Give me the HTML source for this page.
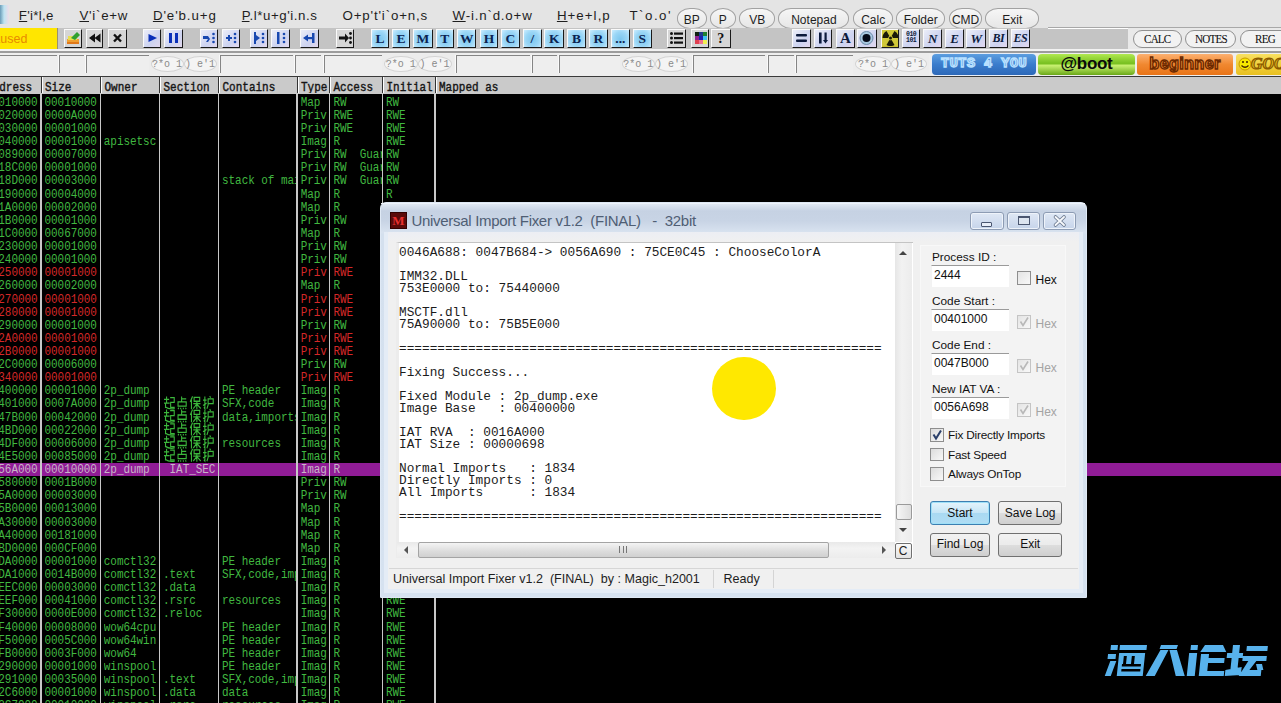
<!DOCTYPE html><html><head><meta charset="utf-8"><style>
*{margin:0;padding:0;box-sizing:border-box}
html,body{width:1281px;height:703px;overflow:hidden;background:#000}
body{position:relative;font-family:"Liberation Sans",sans-serif}
.ab{position:absolute}
.mono{font-family:"Liberation Mono",monospace}
.menu{position:absolute;top:0;left:0;width:1281px;height:28px;background:#e4e4e4}
.mi{position:absolute;top:9.2px;font-size:13.3px;letter-spacing:0.3px;color:#1e1e1e;white-space:pre;line-height:14px}
.rb{position:absolute;top:8px;height:20.5px;border:1.6px solid #a2a2a2;border-radius:13px/10px;background:linear-gradient(#f6f6f6,#e6e6e6);font-size:12px;color:#1e1e1e;text-align:center;line-height:22px}
.tb{position:absolute;top:28px;left:0;width:1281px;height:22px;background:#c4c4c4}
.btn{position:absolute;top:29px;width:19px;height:19px;border:1px solid #2a2a2a;border-top-color:#f0f0f0;border-left-color:#f0f0f0;background:#d8d8d8}
.lb{position:absolute;top:29px;width:19.5px;height:19.5px;border:1px solid #333;border-top-color:#e8f4ff;border-left-color:#e8f4ff;background:linear-gradient(#c9e9ff,#8ccaf2);font-family:"Liberation Serif",serif;font-weight:bold;font-size:14px;color:#0d2a55;text-align:center;line-height:18px}
.ib{position:absolute;top:29px;width:19.5px;height:19.5px;border:1px solid #333;border-top-color:#fff;border-left-color:#fff;background:linear-gradient(#e2ebfa,#bccbea);font-family:"Liberation Serif",serif;font-weight:bold;font-style:italic;font-size:14px;color:#152a4a;text-align:center;line-height:18px}
.r3{position:absolute;top:50px;left:0;width:1281px;height:26.5px;background:#eeeeee}
.hdr{position:absolute;top:76px;left:0;width:1281px;height:17.5px;background:#cacaca;border-top:1.2px solid #3a3a3a}
.hc{position:absolute;top:0;height:16.3px;border-left:1px solid #fff;box-shadow:-1px 0 0 #333;font-family:"Liberation Mono",monospace;font-weight:normal;-webkit-text-stroke:0.35px #151515;font-size:11px;color:#151515;line-height:16px;padding-left:2.5px;white-space:pre;overflow:hidden}
.hc span{display:inline-block;transform:translateY(2.7px) scaleY(1.2);transform-origin:50% 70%}
.vs{position:absolute;top:93.5px;width:1.6px;height:610px;background:#c8c8c8}
.row{position:absolute;left:0;width:1281px;height:13.12px}
.c{position:absolute;top:1.5px;font-family:"Liberation Mono",monospace;font-size:11px;letter-spacing:-0.05px;line-height:13px;white-space:pre;color:#40b840;overflow:hidden}
.c span{display:inline-block;transform:scaleY(1.15)}
.red{color:#d42828}
.sel{color:#c8b4c8}
</style></head><body>
<div class="menu"></div>
<div class="ab" style="left:0;top:5px;width:9px;height:19px;background:linear-gradient(90deg,#6a9cb8,#bfe4f2 45%,#ecdde8)"></div>
<div class="mi" style="left:18.8px;letter-spacing:0.28px"><u>F</u>'i*l,e</div>
<div class="mi" style="left:79.4px;letter-spacing:0.74px"><u>V</u>'i`e+w</div>
<div class="mi" style="left:152.9px;letter-spacing:0.9px"><u>D</u>'e'b.u+g</div>
<div class="mi" style="left:241.8px;letter-spacing:0.56px"><u>P</u>.l*u+g'i.n.s</div>
<div class="mi" style="left:342.5px;letter-spacing:0.85px">O+p't'i`o+n,s</div>
<div class="mi" style="left:452.5px;letter-spacing:0.82px"><u>W</u>-i.n`d.o+w</div>
<div class="mi" style="left:556.9px;letter-spacing:1.05px"><u>H</u>+e+l,p</div>
<div class="mi" style="left:629.5px;letter-spacing:1.48px">T`o.o'</div>
<div class="rb" style="left:676.5px;width:30.5px">BP</div>
<div class="rb" style="left:709.5px;width:26.5px">P</div>
<div class="rb" style="left:739px;width:36.299999999999955px">VB</div>
<div class="rb" style="left:778.3px;width:71.20000000000005px">Notepad</div>
<div class="rb" style="left:853.3px;width:39.700000000000045px">Calc</div>
<div class="rb" style="left:896px;width:49.299999999999955px">Folder</div>
<div class="rb" style="left:948.8px;width:33.60000000000002px">CMD</div>
<div class="rb" style="left:985.3px;width:54.0px">Exit</div>
<div class="tb"></div>
<div class="ab" style="left:1048px;top:27px;width:233px;height:1.5px;background:#fff"></div>
<div class="ab" style="left:0;top:27.6px;width:57.5px;height:22px;background:#ffe600;border-right:1.2px solid #9a9070;border-bottom:1.2px solid #9a9070;overflow:hidden"><div class="ab" style="left:-15px;top:4px;font-size:12.5px;line-height:14px;color:#e88a00;white-space:pre">Paused</div></div>
<div class="ab" style="left:64px;top:28.6px;width:18px;height:19.6px;background:#d6d6d6;border-top:1.5px solid #fafafa;border-left:1.5px solid #fafafa;border-right:1.8px solid #1a1a1a;border-bottom:1.8px solid #1a1a1a;overflow:hidden"><svg class="ab" style="left:0;top:0" width="16" height="16" viewBox="0 0 16 16"><rect x="2" y="9" width="12" height="5" fill="#f0a030"/><rect x="3" y="6" width="9" height="4" fill="#e8e050"/><path d="M6 8 L12 2 L15 5 L10 10Z" fill="#30a030"/><rect x="2" y="12" width="12" height="2" fill="#e07818"/></svg></div>
<div class="ab" style="left:85.7px;top:28.6px;width:17.700000000000003px;height:19.6px;background:#d6d6d6;border-top:1.5px solid #fafafa;border-left:1.5px solid #fafafa;border-right:1.8px solid #1a1a1a;border-bottom:1.8px solid #1a1a1a;overflow:hidden"><svg class="ab" style="left:0;top:0" width="16" height="16" viewBox="0 0 16 16"><path d="M2 8 L8 3.5 V12.5Z M7.5 8 L13.5 3.5 V12.5Z" fill="#111"/></svg></div>
<div class="ab" style="left:108px;top:28.6px;width:18.5px;height:19.6px;background:#d6d6d6;border-top:1.5px solid #fafafa;border-left:1.5px solid #fafafa;border-right:1.8px solid #1a1a1a;border-bottom:1.8px solid #1a1a1a;overflow:hidden"><svg class="ab" style="left:0;top:0" width="17" height="16" viewBox="0 0 17 16"><path d="M5 4.5 L12 11.5 M12 4.5 L5 11.5" stroke="#111" stroke-width="2.4"/></svg></div>
<div class="ab" style="left:142.8px;top:28.6px;width:18.0px;height:19.6px;background:linear-gradient(135deg,#eceef8,#cdd3f0 60%,#e2d8ee);border-top:1.5px solid #fafafa;border-left:1.5px solid #fafafa;border-right:1.8px solid #1a1a1a;border-bottom:1.8px solid #1a1a1a;overflow:hidden"><svg class="ab" style="left:0;top:0" width="16" height="16" viewBox="0 0 16 16"><path d="M4.5 4 L13 8 L4.5 12Z" fill="#0a2fb8"/></svg></div>
<div class="ab" style="left:164.4px;top:28.6px;width:18.299999999999983px;height:19.6px;background:linear-gradient(135deg,#eceef8,#cdd3f0 60%,#e2d8ee);border-top:1.5px solid #fafafa;border-left:1.5px solid #fafafa;border-right:1.8px solid #1a1a1a;border-bottom:1.8px solid #1a1a1a;overflow:hidden"><svg class="ab" style="left:0;top:0" width="16" height="16" viewBox="0 0 16 16"><rect x="4" y="3" width="3" height="10" fill="#0a2fb8"/><rect x="10" y="3" width="3" height="10" fill="#0a2fb8"/></svg></div>
<div class="ab" style="left:199.6px;top:28.6px;width:18.200000000000017px;height:19.6px;background:linear-gradient(135deg,#eceef8,#cdd3f0 60%,#e2d8ee);border-top:1.5px solid #fafafa;border-left:1.5px solid #fafafa;border-right:1.8px solid #1a1a1a;border-bottom:1.8px solid #1a1a1a;overflow:hidden"><svg class="ab" style="left:0;top:0" width="16" height="16" viewBox="0 0 16 16"><path d="M2 6 h5 l2 3 l-2 3 h-2 l2-3 h-5z" fill="#1848b0"/><circle cx="12.5" cy="4" r="1.3" fill="#1848b0"/><circle cx="12.5" cy="8" r="1.3" fill="#1848b0"/><circle cx="12.5" cy="12" r="1.3" fill="#1848b0"/></svg></div>
<div class="ab" style="left:221.5px;top:28.6px;width:18.0px;height:19.6px;background:linear-gradient(135deg,#eceef8,#cdd3f0 60%,#e2d8ee);border-top:1.5px solid #fafafa;border-left:1.5px solid #fafafa;border-right:1.8px solid #1a1a1a;border-bottom:1.8px solid #1a1a1a;overflow:hidden"><svg class="ab" style="left:0;top:0" width="16" height="16" viewBox="0 0 16 16"><path d="M3 7 h6 v2 h-6z M5 5 h2 v6 h-2z" fill="#1848b0"/><circle cx="12" cy="4" r="1.3" fill="#1848b0"/><circle cx="12" cy="8" r="1.3" fill="#1848b0"/><circle cx="12" cy="12" r="1.3" fill="#1848b0"/></svg></div>
<div class="ab" style="left:250px;top:28.6px;width:17.600000000000023px;height:19.6px;background:linear-gradient(135deg,#eceef8,#cdd3f0 60%,#e2d8ee);border-top:1.5px solid #fafafa;border-left:1.5px solid #fafafa;border-right:1.8px solid #1a1a1a;border-bottom:1.8px solid #1a1a1a;overflow:hidden"><svg class="ab" style="left:0;top:0" width="16" height="16" viewBox="0 0 16 16"><rect x="3" y="2" width="2" height="12" fill="#1848b0"/><path d="M5 5 L9 8 L5 11Z" fill="#1848b0"/><circle cx="12" cy="4" r="1.3" fill="#1848b0"/><circle cx="12" cy="8" r="1.3" fill="#1848b0"/><circle cx="12" cy="12" r="1.3" fill="#1848b0"/></svg></div>
<div class="ab" style="left:271px;top:28.6px;width:18.5px;height:19.6px;background:linear-gradient(135deg,#eceef8,#cdd3f0 60%,#e2d8ee);border-top:1.5px solid #fafafa;border-left:1.5px solid #fafafa;border-right:1.8px solid #1a1a1a;border-bottom:1.8px solid #1a1a1a;overflow:hidden"><svg class="ab" style="left:0;top:0" width="16" height="16" viewBox="0 0 16 16"><rect x="5" y="2" width="2.5" height="12" fill="#1848b0"/><circle cx="12" cy="4" r="1.3" fill="#1848b0"/><circle cx="12" cy="8" r="1.3" fill="#1848b0"/><circle cx="12" cy="12" r="1.3" fill="#1848b0"/></svg></div>
<div class="ab" style="left:300px;top:28.6px;width:19px;height:19.6px;background:linear-gradient(135deg,#eceef8,#cdd3f0 60%,#e2d8ee);border-top:1.5px solid #fafafa;border-left:1.5px solid #fafafa;border-right:1.8px solid #1a1a1a;border-bottom:1.8px solid #1a1a1a;overflow:hidden"><svg class="ab" style="left:0;top:0" width="16" height="16" viewBox="0 0 16 16"><path d="M2 8 L7 4.5 V11.5Z" fill="#1848b0"/><rect x="6" y="7" width="5" height="2.2" fill="#1848b0"/><rect x="11" y="3" width="2.5" height="10" fill="#1848b0"/></svg></div>
<div class="ab" style="left:335.9px;top:28.6px;width:17.700000000000045px;height:19.6px;background:#d6d6d6;border-top:1.5px solid #fafafa;border-left:1.5px solid #fafafa;border-right:1.8px solid #1a1a1a;border-bottom:1.8px solid #1a1a1a;overflow:hidden"><svg class="ab" style="left:0;top:0" width="16" height="16" viewBox="0 0 16 16"><path d="M2 6.5 h6 v-3 l4 4.5 l-4 4.5 v-3 h-6z" fill="#111"/><circle cx="13.5" cy="3.5" r="1.4" fill="#111"/><circle cx="13.5" cy="8" r="1.4" fill="#111"/><circle cx="13.5" cy="12.5" r="1.4" fill="#111"/></svg></div>
<div class="ab" style="left:371.2px;top:28.6px;width:17.80000000000001px;height:19.6px;background:radial-gradient(ellipse at 50% 55%,#7cc6ee 0%,#9ad6f6 55%,#cdeeff 100%);border-top:1.5px solid #fafafa;border-left:1.5px solid #fafafa;border-right:1.8px solid #1a1a1a;border-bottom:1.8px solid #1a1a1a;overflow:hidden"><div class="ab" style="left:0;top:0;width:100%;text-align:center;font-family:'Liberation Serif',serif;font-weight:bold;font-size:13.5px;line-height:17px;color:#0a2250">L</div></div>
<div class="ab" style="left:392px;top:28.6px;width:18px;height:19.6px;background:radial-gradient(ellipse at 50% 55%,#7cc6ee 0%,#9ad6f6 55%,#cdeeff 100%);border-top:1.5px solid #fafafa;border-left:1.5px solid #fafafa;border-right:1.8px solid #1a1a1a;border-bottom:1.8px solid #1a1a1a;overflow:hidden"><div class="ab" style="left:0;top:0;width:100%;text-align:center;font-family:'Liberation Serif',serif;font-weight:bold;font-size:13.5px;line-height:17px;color:#0a2250">E</div></div>
<div class="ab" style="left:413px;top:28.6px;width:19.80000000000001px;height:19.6px;background:radial-gradient(ellipse at 50% 55%,#7cc6ee 0%,#9ad6f6 55%,#cdeeff 100%);border-top:1.5px solid #fafafa;border-left:1.5px solid #fafafa;border-right:1.8px solid #1a1a1a;border-bottom:1.8px solid #1a1a1a;overflow:hidden"><div class="ab" style="left:0;top:0;width:100%;text-align:center;font-family:'Liberation Serif',serif;font-weight:bold;font-size:13.5px;line-height:17px;color:#0a2250">M</div></div>
<div class="ab" style="left:436px;top:28.6px;width:17.69999999999999px;height:19.6px;background:radial-gradient(ellipse at 50% 55%,#7cc6ee 0%,#9ad6f6 55%,#cdeeff 100%);border-top:1.5px solid #fafafa;border-left:1.5px solid #fafafa;border-right:1.8px solid #1a1a1a;border-bottom:1.8px solid #1a1a1a;overflow:hidden"><div class="ab" style="left:0;top:0;width:100%;text-align:center;font-family:'Liberation Serif',serif;font-weight:bold;font-size:13.5px;line-height:17px;color:#0a2250">T</div></div>
<div class="ab" style="left:456.8px;top:28.6px;width:19.69999999999999px;height:19.6px;background:radial-gradient(ellipse at 50% 55%,#7cc6ee 0%,#9ad6f6 55%,#cdeeff 100%);border-top:1.5px solid #fafafa;border-left:1.5px solid #fafafa;border-right:1.8px solid #1a1a1a;border-bottom:1.8px solid #1a1a1a;overflow:hidden"><div class="ab" style="left:0;top:0;width:100%;text-align:center;font-family:'Liberation Serif',serif;font-weight:bold;font-size:13.5px;line-height:17px;color:#0a2250">W</div></div>
<div class="ab" style="left:479.7px;top:28.6px;width:18.69999999999999px;height:19.6px;background:radial-gradient(ellipse at 50% 55%,#7cc6ee 0%,#9ad6f6 55%,#cdeeff 100%);border-top:1.5px solid #fafafa;border-left:1.5px solid #fafafa;border-right:1.8px solid #1a1a1a;border-bottom:1.8px solid #1a1a1a;overflow:hidden"><div class="ab" style="left:0;top:0;width:100%;text-align:center;font-family:'Liberation Serif',serif;font-weight:bold;font-size:13.5px;line-height:17px;color:#0a2250">H</div></div>
<div class="ab" style="left:500.6px;top:28.6px;width:19.699999999999932px;height:19.6px;background:radial-gradient(ellipse at 50% 55%,#7cc6ee 0%,#9ad6f6 55%,#cdeeff 100%);border-top:1.5px solid #fafafa;border-left:1.5px solid #fafafa;border-right:1.8px solid #1a1a1a;border-bottom:1.8px solid #1a1a1a;overflow:hidden"><div class="ab" style="left:0;top:0;width:100%;text-align:center;font-family:'Liberation Serif',serif;font-weight:bold;font-size:13.5px;line-height:17px;color:#0a2250">C</div></div>
<div class="ab" style="left:522.5px;top:28.6px;width:19.700000000000045px;height:19.6px;background:radial-gradient(ellipse at 50% 55%,#7cc6ee 0%,#9ad6f6 55%,#cdeeff 100%);border-top:1.5px solid #fafafa;border-left:1.5px solid #fafafa;border-right:1.8px solid #1a1a1a;border-bottom:1.8px solid #1a1a1a;overflow:hidden"><div class="ab" style="left:0;top:0;width:100%;text-align:center;font-family:'Liberation Serif',serif;font-weight:bold;font-size:13.5px;line-height:17px;color:#0a2250">/</div></div>
<div class="ab" style="left:544.4px;top:28.6px;width:19.600000000000023px;height:19.6px;background:radial-gradient(ellipse at 50% 55%,#7cc6ee 0%,#9ad6f6 55%,#cdeeff 100%);border-top:1.5px solid #fafafa;border-left:1.5px solid #fafafa;border-right:1.8px solid #1a1a1a;border-bottom:1.8px solid #1a1a1a;overflow:hidden"><div class="ab" style="left:0;top:0;width:100%;text-align:center;font-family:'Liberation Serif',serif;font-weight:bold;font-size:13.5px;line-height:17px;color:#0a2250">K</div></div>
<div class="ab" style="left:567px;top:28.6px;width:19px;height:19.6px;background:radial-gradient(ellipse at 50% 55%,#7cc6ee 0%,#9ad6f6 55%,#cdeeff 100%);border-top:1.5px solid #fafafa;border-left:1.5px solid #fafafa;border-right:1.8px solid #1a1a1a;border-bottom:1.8px solid #1a1a1a;overflow:hidden"><div class="ab" style="left:0;top:0;width:100%;text-align:center;font-family:'Liberation Serif',serif;font-weight:bold;font-size:13.5px;line-height:17px;color:#0a2250">B</div></div>
<div class="ab" style="left:589px;top:28.6px;width:18.799999999999955px;height:19.6px;background:radial-gradient(ellipse at 50% 55%,#7cc6ee 0%,#9ad6f6 55%,#cdeeff 100%);border-top:1.5px solid #fafafa;border-left:1.5px solid #fafafa;border-right:1.8px solid #1a1a1a;border-bottom:1.8px solid #1a1a1a;overflow:hidden"><div class="ab" style="left:0;top:0;width:100%;text-align:center;font-family:'Liberation Serif',serif;font-weight:bold;font-size:13.5px;line-height:17px;color:#0a2250">R</div></div>
<div class="ab" style="left:611px;top:28.6px;width:18.700000000000045px;height:19.6px;background:radial-gradient(ellipse at 50% 55%,#7cc6ee 0%,#9ad6f6 55%,#cdeeff 100%);border-top:1.5px solid #fafafa;border-left:1.5px solid #fafafa;border-right:1.8px solid #1a1a1a;border-bottom:1.8px solid #1a1a1a;overflow:hidden"><div class="ab" style="left:0;top:0;width:100%;text-align:center;font-family:'Liberation Serif',serif;font-weight:bold;font-size:13.5px;line-height:17px;color:#0a2250">...</div></div>
<div class="ab" style="left:632.8px;top:28.6px;width:18.800000000000068px;height:19.6px;background:radial-gradient(ellipse at 50% 55%,#7cc6ee 0%,#9ad6f6 55%,#cdeeff 100%);border-top:1.5px solid #fafafa;border-left:1.5px solid #fafafa;border-right:1.8px solid #1a1a1a;border-bottom:1.8px solid #1a1a1a;overflow:hidden"><div class="ab" style="left:0;top:0;width:100%;text-align:center;font-family:'Liberation Serif',serif;font-weight:bold;font-size:13.5px;line-height:17px;color:#0a2250">S</div></div>
<div class="ab" style="left:667px;top:28.6px;width:19px;height:19.6px;background:#d6d6d6;border-top:1.5px solid #fafafa;border-left:1.5px solid #fafafa;border-right:1.8px solid #1a1a1a;border-bottom:1.8px solid #1a1a1a;overflow:hidden"><svg class="ab" style="left:0;top:0" width="16" height="16" viewBox="0 0 16 16"><circle cx="3.5" cy="3.5" r="1.5" fill="#111"/><circle cx="3.5" cy="8" r="1.5" fill="#111"/><circle cx="3.5" cy="12.5" r="1.5" fill="#111"/><rect x="6" y="2.5" width="9" height="2.2" fill="#111"/><rect x="6" y="7" width="9" height="2.2" fill="#111"/><rect x="6" y="11.5" width="9" height="2.2" fill="#111"/></svg></div>
<div class="ab" style="left:690.6px;top:28.6px;width:18.799999999999955px;height:19.6px;background:#d6d6d6;border-top:1.5px solid #fafafa;border-left:1.5px solid #fafafa;border-right:1.8px solid #1a1a1a;border-bottom:1.8px solid #1a1a1a;overflow:hidden"><svg class="ab" style="left:0;top:0" width="16" height="16" viewBox="0 0 16 16"><rect x="3" y="2" width="4" height="4" fill="#102010"/><rect x="7" y="2" width="4" height="4" fill="#203890"/><rect x="11" y="2" width="4" height="4" fill="#208030"/><rect x="3" y="6" width="4" height="4" fill="#902090"/><rect x="7" y="6" width="4" height="4" fill="#2020b0"/><rect x="11" y="6" width="4" height="4" fill="#40c0f0"/><rect x="3" y="10" width="4" height="4" fill="#e04050"/><rect x="7" y="10" width="4" height="4" fill="#f07090"/><rect x="11" y="10" width="4" height="4" fill="#f0f050"/></svg></div>
<div class="ab" style="left:711px;top:28.6px;width:19.600000000000023px;height:19.6px;background:#d6d6d6;border-top:1.5px solid #fafafa;border-left:1.5px solid #fafafa;border-right:1.8px solid #1a1a1a;border-bottom:1.8px solid #1a1a1a;overflow:hidden"><div class="ab" style="left:0;top:0;width:100%;text-align:center;font-family:'Liberation Serif',serif;font-weight:bold;font-size:14px;line-height:17px;color:#111">?</div></div>
<div class="ab" style="left:792px;top:28.6px;width:19.399999999999977px;height:19.6px;background:linear-gradient(135deg,#eceef8,#cdd3f0 60%,#e2d8ee);border-top:1.5px solid #fafafa;border-left:1.5px solid #fafafa;border-right:1.8px solid #1a1a1a;border-bottom:1.8px solid #1a1a1a;overflow:hidden"><svg class="ab" style="left:0;top:0" width="17" height="16" viewBox="0 0 17 16"><rect x="3" y="4" width="11" height="2.6" rx="1" fill="#0c1a3c"/><rect x="3" y="9.5" width="11" height="2.6" rx="1" fill="#0c1a3c"/></svg></div>
<div class="ab" style="left:813.8px;top:28.6px;width:18.700000000000045px;height:19.6px;background:linear-gradient(135deg,#eceef8,#cdd3f0 60%,#e2d8ee);border-top:1.5px solid #fafafa;border-left:1.5px solid #fafafa;border-right:1.8px solid #1a1a1a;border-bottom:1.8px solid #1a1a1a;overflow:hidden"><svg class="ab" style="left:0;top:0" width="17" height="16" viewBox="0 0 17 16"><rect x="4" y="2.5" width="2.6" height="11" fill="#0c1a3c"/><rect x="9.5" y="2.5" width="2.2" height="8" fill="#0c1a3c"/><path d="M8 10 h5 l-2.5 3.5z" fill="#0c1a3c"/></svg></div>
<div class="ab" style="left:836px;top:28.6px;width:18.799999999999955px;height:19.6px;background:linear-gradient(135deg,#eceef8,#cdd3f0 60%,#e2d8ee);border-top:1.5px solid #fafafa;border-left:1.5px solid #fafafa;border-right:1.8px solid #1a1a1a;border-bottom:1.8px solid #1a1a1a;overflow:hidden"><div class="ab" style="left:0;top:0;width:100%;text-align:center;font-family:'Liberation Serif',serif;font-weight:bold;font-size:15px;line-height:17px;color:#0c1a3c">A</div></div>
<div class="ab" style="left:857px;top:28.6px;width:20px;height:19.6px;background:linear-gradient(135deg,#eceef8,#cdd3f0 60%,#e2d8ee);border-top:1.5px solid #fafafa;border-left:1.5px solid #fafafa;border-right:1.8px solid #1a1a1a;border-bottom:1.8px solid #1a1a1a;overflow:hidden"><svg class="ab" style="left:0;top:0" width="17" height="16" viewBox="0 0 17 16"><circle cx="8.5" cy="8" r="6.5" fill="#a8c8e0" stroke="#6a8aa8" stroke-width="1"/><circle cx="8.5" cy="8" r="4" fill="#050a18"/></svg></div>
<div class="ab" style="left:880.5px;top:28.6px;width:18.799999999999955px;height:19.6px;background:#c8c030;border-top:1.5px solid #fafafa;border-left:1.5px solid #fafafa;border-right:1.8px solid #1a1a1a;border-bottom:1.8px solid #1a1a1a;overflow:hidden"><svg class="ab" style="left:0;top:0" width="17" height="16" viewBox="0 0 17 16"><rect x="0" y="0" width="17" height="16" fill="#d0c838"/><path d="M9.65 9.99L12.50 14.93A8 8 0 0 1 4.50 14.93L7.35 9.99A2.3 2.3 0 0 0 9.65 9.99ZM6.20 8.00L0.50 8.00A8 8 0 0 1 4.50 1.07L7.35 6.01A2.3 2.3 0 0 0 6.20 8.00ZM9.65 6.01L12.50 1.07A8 8 0 0 1 16.50 8.00L10.80 8.00A2.3 2.3 0 0 0 9.65 6.01Z" fill="#1a1a08"/><circle cx="8.5" cy="8" r="1.5" fill="#1a1a08"/></svg></div>
<div class="ab" style="left:902px;top:28.6px;width:18.299999999999955px;height:19.6px;background:linear-gradient(135deg,#eceef8,#cdd3f0 60%,#e2d8ee);border-top:1.5px solid #fafafa;border-left:1.5px solid #fafafa;border-right:1.8px solid #1a1a1a;border-bottom:1.8px solid #1a1a1a;overflow:hidden"><div class="ab mono" style="left:0;top:2px;width:100%;text-align:center;font-weight:bold;font-size:6.5px;line-height:6.5px;color:#0c1a3c;letter-spacing:-0.5px">010<br>101</div></div>
<div class="ab" style="left:923px;top:28.6px;width:18.899999999999977px;height:19.6px;background:linear-gradient(135deg,#eceef8,#cdd3f0 60%,#e2d8ee);border-top:1.5px solid #fafafa;border-left:1.5px solid #fafafa;border-right:1.8px solid #1a1a1a;border-bottom:1.8px solid #1a1a1a;overflow:hidden"><div class="ab" style="left:0;top:0;width:100%;text-align:center;font-family:'Liberation Serif',serif;font-weight:bold;font-style:italic;font-size:13px;line-height:17px;color:#0c1a3c;letter-spacing:-0.5px">N</div></div>
<div class="ab" style="left:945px;top:28.6px;width:18.600000000000023px;height:19.6px;background:linear-gradient(135deg,#eceef8,#cdd3f0 60%,#e2d8ee);border-top:1.5px solid #fafafa;border-left:1.5px solid #fafafa;border-right:1.8px solid #1a1a1a;border-bottom:1.8px solid #1a1a1a;overflow:hidden"><div class="ab" style="left:0;top:0;width:100%;text-align:center;font-family:'Liberation Serif',serif;font-weight:bold;font-style:italic;font-size:13px;line-height:17px;color:#0c1a3c;letter-spacing:-0.5px">E</div></div>
<div class="ab" style="left:966px;top:28.6px;width:19.899999999999977px;height:19.6px;background:linear-gradient(135deg,#eceef8,#cdd3f0 60%,#e2d8ee);border-top:1.5px solid #fafafa;border-left:1.5px solid #fafafa;border-right:1.8px solid #1a1a1a;border-bottom:1.8px solid #1a1a1a;overflow:hidden"><div class="ab" style="left:0;top:0;width:100%;text-align:center;font-family:'Liberation Serif',serif;font-weight:bold;font-style:italic;font-size:13px;line-height:17px;color:#0c1a3c;letter-spacing:-0.5px">W</div></div>
<div class="ab" style="left:988.7px;top:28.6px;width:19.299999999999955px;height:19.6px;background:linear-gradient(135deg,#eceef8,#cdd3f0 60%,#e2d8ee);border-top:1.5px solid #fafafa;border-left:1.5px solid #fafafa;border-right:1.8px solid #1a1a1a;border-bottom:1.8px solid #1a1a1a;overflow:hidden"><div class="ab" style="left:0;top:0;width:100%;text-align:center;font-family:'Liberation Serif',serif;font-weight:bold;font-style:italic;font-size:12px;line-height:17px;color:#0c1a3c;letter-spacing:-0.5px">BI</div></div>
<div class="ab" style="left:1010.5px;top:28.6px;width:19.90000000000009px;height:19.6px;background:linear-gradient(135deg,#eceef8,#cdd3f0 60%,#e2d8ee);border-top:1.5px solid #fafafa;border-left:1.5px solid #fafafa;border-right:1.8px solid #1a1a1a;border-bottom:1.8px solid #1a1a1a;overflow:hidden"><div class="ab" style="left:0;top:0;width:100%;text-align:center;font-family:'Liberation Serif',serif;font-weight:bold;font-style:italic;font-size:12px;line-height:17px;color:#0c1a3c;letter-spacing:-0.5px">ES</div></div>
<div class="ab" style="left:1128px;top:28px;width:153px;height:22px;background:#e9e9e9"></div>
<div class="ab" style="left:1048px;top:26.6px;width:233px;height:1px;background:#a8a8a8"></div>
<div class="ab" style="left:1133px;top:29.5px;width:49px;height:18px;border:1.5px solid #909090;border-radius:9px;background:#f2f2f2"></div>
<div class="ab" style="left:1144px;top:31.5px;font-family:'Liberation Serif',serif;font-size:12px;letter-spacing:-0.8px;-webkit-text-stroke:0.1px #111;color:#111;line-height:15px;white-space:pre;transform:scaleX(0.92);transform-origin:0 0">CALC</div>
<div class="ab" style="left:1185px;top:29.5px;width:51px;height:18px;border:1.5px solid #909090;border-radius:9px;background:#f2f2f2"></div>
<div class="ab" style="left:1195px;top:31.5px;font-family:'Liberation Serif',serif;font-size:12px;letter-spacing:-0.8px;-webkit-text-stroke:0.1px #111;color:#111;line-height:15px;white-space:pre;transform:scaleX(0.92);transform-origin:0 0">NOTES</div>
<div class="ab" style="left:1239.8px;top:29.5px;width:60.200000000000045px;height:18px;border:1.5px solid #909090;border-radius:9px;background:#f2f2f2"></div>
<div class="ab" style="left:1254.5px;top:31.5px;font-family:'Liberation Serif',serif;font-size:12px;letter-spacing:-0.8px;-webkit-text-stroke:0.1px #111;color:#111;line-height:15px;white-space:pre;transform:scaleX(0.92);transform-origin:0 0">REG</div>
<div class="r3"></div>
<div class="ab" style="left:0;top:49.2px;width:1281px;height:1.8px;background:#f2f2f2"></div>
<div class="ab" style="left:0;top:51px;width:1281px;height:1.6px;background:#9c9c9c"></div>
<div class="ab" style="left:-1.8px;top:55px;width:58.599999999999994px;height:18px;border-top:1.3px solid #858585;border-left:1.3px solid #858585;box-shadow:-1px 0 0 #fafafa"></div>
<div class="ab" style="left:59.0px;top:55px;width:25.000000000000004px;height:18px;border-top:1.3px solid #858585;border-left:1.3px solid #858585;box-shadow:-1px 0 0 #fafafa"></div>
<div class="ab" style="left:86.2px;top:55px;width:131.8px;height:18px;border-top:1.3px solid #858585;border-left:1.3px solid #858585;box-shadow:-1px 0 0 #fafafa"></div>
<div class="ab" style="left:220.2px;top:55px;width:72.8px;height:18px;border-top:1.3px solid #858585;border-left:1.3px solid #858585;box-shadow:-1px 0 0 #fafafa"></div>
<div class="ab" style="left:295.2px;top:55px;width:26.199999999999978px;height:18px;border-top:1.3px solid #858585;border-left:1.3px solid #858585;box-shadow:-1px 0 0 #fafafa"></div>
<div class="ab" style="left:323.59999999999997px;top:55px;width:130.40000000000003px;height:18px;border-top:1.3px solid #858585;border-left:1.3px solid #858585;box-shadow:-1px 0 0 #fafafa"></div>
<div class="ab" style="left:456.2px;top:55px;width:73.8px;height:18px;border-top:1.3px solid #858585;border-left:1.3px solid #858585;box-shadow:-1px 0 0 #fafafa"></div>
<div class="ab" style="left:532.2px;top:55px;width:24.8px;height:18px;border-top:1.3px solid #858585;border-left:1.3px solid #858585;box-shadow:-1px 0 0 #fafafa"></div>
<div class="ab" style="left:559.2px;top:55px;width:131.3px;height:18px;border-top:1.3px solid #858585;border-left:1.3px solid #858585;box-shadow:-1px 0 0 #fafafa"></div>
<div class="ab" style="left:692.7px;top:55px;width:72.8px;height:18px;border-top:1.3px solid #858585;border-left:1.3px solid #858585;box-shadow:-1px 0 0 #fafafa"></div>
<div class="ab" style="left:767.7px;top:55px;width:25.900000000000023px;height:18px;border-top:1.3px solid #858585;border-left:1.3px solid #858585;box-shadow:-1px 0 0 #fafafa"></div>
<div class="ab" style="left:795.8000000000001px;top:55px;width:132.2px;height:18px;border-top:1.3px solid #858585;border-left:1.3px solid #858585;box-shadow:-1px 0 0 #fafafa"></div>
<div class="ab" style="left:148.5px;top:53.5px;width:70.1px;height:21px;background:#ececec"></div>
<div class="ab" style="left:150.5px;top:56.3px;width:33.05px;height:16.2px;border:1px solid #d4d4d4;border-radius:50%;background:#f4f4f4;font-family:'Liberation Mono',monospace;font-size:10px;color:#8a8a8a;text-align:center;line-height:15px;white-space:pre">?*o 1</div>
<div class="ab" style="left:183.55px;top:56.3px;width:33.05px;height:16.2px;border:1px solid #d4d4d4;border-radius:50%;background:#f4f4f4;font-family:'Liberation Mono',monospace;font-size:10px;color:#8a8a8a;text-align:center;line-height:15px;white-space:pre">) e'1</div>
<div class="ab" style="left:382px;top:53.5px;width:71.5px;height:21px;background:#ececec"></div>
<div class="ab" style="left:384px;top:56.3px;width:33.75px;height:16.2px;border:1px solid #d4d4d4;border-radius:50%;background:#f4f4f4;font-family:'Liberation Mono',monospace;font-size:10px;color:#8a8a8a;text-align:center;line-height:15px;white-space:pre">?*o 1</div>
<div class="ab" style="left:417.75px;top:56.3px;width:33.75px;height:16.2px;border:1px solid #d4d4d4;border-radius:50%;background:#f4f4f4;font-family:'Liberation Mono',monospace;font-size:10px;color:#8a8a8a;text-align:center;line-height:15px;white-space:pre">) e'1</div>
<div class="ab" style="left:620px;top:53.5px;width:69.5px;height:21px;background:#ececec"></div>
<div class="ab" style="left:622px;top:56.3px;width:32.75px;height:16.2px;border:1px solid #d4d4d4;border-radius:50%;background:#f4f4f4;font-family:'Liberation Mono',monospace;font-size:10px;color:#8a8a8a;text-align:center;line-height:15px;white-space:pre">?*o 1</div>
<div class="ab" style="left:654.75px;top:56.3px;width:32.75px;height:16.2px;border:1px solid #d4d4d4;border-radius:50%;background:#f4f4f4;font-family:'Liberation Mono',monospace;font-size:10px;color:#8a8a8a;text-align:center;line-height:15px;white-space:pre">) e'1</div>
<div class="ab" style="left:853px;top:53.5px;width:76px;height:21px;background:#ececec"></div>
<div class="ab" style="left:855px;top:56.3px;width:36.0px;height:16.2px;border:1px solid #d4d4d4;border-radius:50%;background:#f4f4f4;font-family:'Liberation Mono',monospace;font-size:10px;color:#8a8a8a;text-align:center;line-height:15px;white-space:pre">?*o 1</div>
<div class="ab" style="left:891.0px;top:56.3px;width:36.0px;height:16.2px;border:1px solid #d4d4d4;border-radius:50%;background:#f4f4f4;font-family:'Liberation Mono',monospace;font-size:10px;color:#8a8a8a;text-align:center;line-height:15px;white-space:pre">) e'1</div>
<div class="ab" style="left:931.6px;top:54.3px;width:104.4px;height:20.6px;border-radius:4px;background:linear-gradient(#5c9ee0,#3a7ccc 50%,#2c68b8);box-shadow:0 0 0 1px #e8eef8"><div class="ab" style="left:5px;top:1px;width:95px;font-family:'Liberation Mono',monospace;font-weight:bold;font-size:13.5px;line-height:18px;color:#3c7cc8;-webkit-text-stroke:1.4px #b8e0ff;letter-spacing:0.5px;white-space:pre;text-align:center">TUTS 4 YOU</div></div>
<div class="ab" style="left:1038px;top:54.3px;width:97px;height:20.6px;border-radius:4px;background:linear-gradient(#b0e850,#78c020 45%,#c8f070 55%,#6aa818);color:#0a0a0a;font-weight:bold;font-size:17px;text-align:center;line-height:20px;letter-spacing:-0.3px">@boot</div>
<div class="ab" style="left:1137px;top:54.3px;width:96px;height:20.6px;border-radius:3px;background:linear-gradient(#fcb070,#f08830 50%,#e87418);color:#f08830;font-weight:bold;font-size:16.5px;text-align:center;line-height:19px;-webkit-text-stroke:1.3px #6a2800;letter-spacing:0.2px">beginner</div>
<div class="ab" style="left:1236px;top:54.3px;width:50px;height:20.6px;border-radius:3px;background:linear-gradient(#f8e060,#e8c020);overflow:hidden"><svg class="ab" style="left:2px;top:2px" width="14" height="16" viewBox="0 0 14 16"><circle cx="7" cy="8" r="6" fill="#f8e800" stroke="#c89800" stroke-width="1"/><circle cx="5" cy="6" r="1" fill="#402000"/><circle cx="9" cy="6" r="1" fill="#402000"/><path d="M3.5 9.5Q7 13 10.5 9.5" fill="none" stroke="#402000" stroke-width="1.2"/></svg><div class="ab" style="left:15px;top:0;font-family:'Liberation Serif',serif;font-style:italic;font-weight:bold;font-size:16px;line-height:20px;color:#e8c020;-webkit-text-stroke:1.2px #8a5a00">GOO</div></div>
<div class="hdr">
<div class="hc" style="left:-17.5px;width:59px"><span>Address</span></div>
<div class="hc" style="left:41.5px;width:59.5px"><span>Size</span></div>
<div class="hc" style="left:101.0px;width:59.0px"><span>Owner</span></div>
<div class="hc" style="left:160.0px;width:59.0px"><span>Section</span></div>
<div class="hc" style="left:219.0px;width:78.5px"><span>Contains</span></div>
<div class="hc" style="left:297.5px;width:32.5px"><span>Type</span></div>
<div class="hc" style="left:330.0px;width:53.0px"><span>Access</span></div>
<div class="hc" style="left:383.0px;width:52.5px"><span>Initial</span></div>
<div class="hc" style="left:435.5px;width:846px"><span>Mapped as</span></div>
</div>
<div class="row" style="top:95.20px;">
<div class="c" style="left:-14.8px;width:55.8px"><span>00010000</span></div>
<div class="c" style="left:44.5px;width:56.0px"><span>00010000</span></div>
<div class="c" style="left:300.7px;width:28.80000000000001px"><span>Map</span></div>
<div class="c" style="left:333.5px;width:49.0px"><span>RW</span></div>
<div class="c" style="left:386px;width:49px"><span>RW</span></div>
</div>
<div class="row" style="top:108.32px;">
<div class="c" style="left:-14.8px;width:55.8px"><span>00020000</span></div>
<div class="c" style="left:44.5px;width:56.0px"><span>0000A000</span></div>
<div class="c" style="left:300.7px;width:28.80000000000001px"><span>Priv</span></div>
<div class="c" style="left:333.5px;width:49.0px"><span>RWE</span></div>
<div class="c" style="left:386px;width:49px"><span>RWE</span></div>
</div>
<div class="row" style="top:121.44px;">
<div class="c" style="left:-14.8px;width:55.8px"><span>00030000</span></div>
<div class="c" style="left:44.5px;width:56.0px"><span>00001000</span></div>
<div class="c" style="left:300.7px;width:28.80000000000001px"><span>Priv</span></div>
<div class="c" style="left:333.5px;width:49.0px"><span>RWE</span></div>
<div class="c" style="left:386px;width:49px"><span>RWE</span></div>
</div>
<div class="row" style="top:134.56px;">
<div class="c" style="left:-14.8px;width:55.8px"><span>00040000</span></div>
<div class="c" style="left:44.5px;width:56.0px"><span>00001000</span></div>
<div class="c" style="left:103.8px;width:55.7px"><span>apisetsc</span></div>
<div class="c" style="left:300.7px;width:28.80000000000001px"><span>Imag</span></div>
<div class="c" style="left:333.5px;width:49.0px"><span>R</span></div>
<div class="c" style="left:386px;width:49px"><span>RWE</span></div>
</div>
<div class="row" style="top:147.68px;">
<div class="c" style="left:-14.8px;width:55.8px"><span>00089000</span></div>
<div class="c" style="left:44.5px;width:56.0px"><span>00007000</span></div>
<div class="c" style="left:300.7px;width:28.80000000000001px"><span>Priv</span></div>
<div class="c" style="left:333.5px;width:49.0px"><span>RW  Guar</span></div>
<div class="c" style="left:386px;width:49px"><span>RW</span></div>
</div>
<div class="row" style="top:160.80px;">
<div class="c" style="left:-14.8px;width:55.8px"><span>0018C000</span></div>
<div class="c" style="left:44.5px;width:56.0px"><span>00001000</span></div>
<div class="c" style="left:300.7px;width:28.80000000000001px"><span>Priv</span></div>
<div class="c" style="left:333.5px;width:49.0px"><span>RW  Guar</span></div>
<div class="c" style="left:386px;width:49px"><span>RW</span></div>
</div>
<div class="row" style="top:173.92px;">
<div class="c" style="left:-14.8px;width:55.8px"><span>0018D000</span></div>
<div class="c" style="left:44.5px;width:56.0px"><span>00003000</span></div>
<div class="c" style="left:222px;width:75px"><span>stack of main</span></div>
<div class="c" style="left:300.7px;width:28.80000000000001px"><span>Priv</span></div>
<div class="c" style="left:333.5px;width:49.0px"><span>RW  Guar</span></div>
<div class="c" style="left:386px;width:49px"><span>RW</span></div>
</div>
<div class="row" style="top:187.04px;">
<div class="c" style="left:-14.8px;width:55.8px"><span>00190000</span></div>
<div class="c" style="left:44.5px;width:56.0px"><span>00004000</span></div>
<div class="c" style="left:300.7px;width:28.80000000000001px"><span>Map</span></div>
<div class="c" style="left:333.5px;width:49.0px"><span>R</span></div>
<div class="c" style="left:386px;width:49px"><span>R</span></div>
</div>
<div class="row" style="top:200.16px;">
<div class="c" style="left:-14.8px;width:55.8px"><span>001A0000</span></div>
<div class="c" style="left:44.5px;width:56.0px"><span>00002000</span></div>
<div class="c" style="left:300.7px;width:28.80000000000001px"><span>Map</span></div>
<div class="c" style="left:333.5px;width:49.0px"><span>R</span></div>
<div class="c" style="left:386px;width:49px"><span>R</span></div>
</div>
<div class="row" style="top:213.28px;">
<div class="c" style="left:-14.8px;width:55.8px"><span>001B0000</span></div>
<div class="c" style="left:44.5px;width:56.0px"><span>00001000</span></div>
<div class="c" style="left:300.7px;width:28.80000000000001px"><span>Priv</span></div>
<div class="c" style="left:333.5px;width:49.0px"><span>RW</span></div>
<div class="c" style="left:386px;width:49px"><span>RW</span></div>
</div>
<div class="row" style="top:226.40px;">
<div class="c" style="left:-14.8px;width:55.8px"><span>001C0000</span></div>
<div class="c" style="left:44.5px;width:56.0px"><span>00067000</span></div>
<div class="c" style="left:300.7px;width:28.80000000000001px"><span>Map</span></div>
<div class="c" style="left:333.5px;width:49.0px"><span>R</span></div>
<div class="c" style="left:386px;width:49px"><span>R</span></div>
</div>
<div class="row" style="top:239.52px;">
<div class="c" style="left:-14.8px;width:55.8px"><span>00230000</span></div>
<div class="c" style="left:44.5px;width:56.0px"><span>00001000</span></div>
<div class="c" style="left:300.7px;width:28.80000000000001px"><span>Priv</span></div>
<div class="c" style="left:333.5px;width:49.0px"><span>RW</span></div>
<div class="c" style="left:386px;width:49px"><span>RW</span></div>
</div>
<div class="row" style="top:252.64px;">
<div class="c" style="left:-14.8px;width:55.8px"><span>00240000</span></div>
<div class="c" style="left:44.5px;width:56.0px"><span>00001000</span></div>
<div class="c" style="left:300.7px;width:28.80000000000001px"><span>Priv</span></div>
<div class="c" style="left:333.5px;width:49.0px"><span>RW</span></div>
<div class="c" style="left:386px;width:49px"><span>RW</span></div>
</div>
<div class="row" style="top:265.76px;">
<div class="c red" style="left:-14.8px;width:55.8px"><span>00250000</span></div>
<div class="c red" style="left:44.5px;width:56.0px"><span>00001000</span></div>
<div class="c red" style="left:300.7px;width:28.80000000000001px"><span>Priv</span></div>
<div class="c red" style="left:333.5px;width:49.0px"><span>RWE</span></div>
<div class="c red" style="left:386px;width:49px"><span>RWE</span></div>
</div>
<div class="row" style="top:278.88px;">
<div class="c" style="left:-14.8px;width:55.8px"><span>00260000</span></div>
<div class="c" style="left:44.5px;width:56.0px"><span>00002000</span></div>
<div class="c" style="left:300.7px;width:28.80000000000001px"><span>Map</span></div>
<div class="c" style="left:333.5px;width:49.0px"><span>R</span></div>
<div class="c" style="left:386px;width:49px"><span>R</span></div>
</div>
<div class="row" style="top:292.00px;">
<div class="c red" style="left:-14.8px;width:55.8px"><span>00270000</span></div>
<div class="c red" style="left:44.5px;width:56.0px"><span>00001000</span></div>
<div class="c red" style="left:300.7px;width:28.80000000000001px"><span>Priv</span></div>
<div class="c red" style="left:333.5px;width:49.0px"><span>RWE</span></div>
<div class="c red" style="left:386px;width:49px"><span>RWE</span></div>
</div>
<div class="row" style="top:305.12px;">
<div class="c red" style="left:-14.8px;width:55.8px"><span>00280000</span></div>
<div class="c red" style="left:44.5px;width:56.0px"><span>00001000</span></div>
<div class="c red" style="left:300.7px;width:28.80000000000001px"><span>Priv</span></div>
<div class="c red" style="left:333.5px;width:49.0px"><span>RWE</span></div>
<div class="c red" style="left:386px;width:49px"><span>RWE</span></div>
</div>
<div class="row" style="top:318.24px;">
<div class="c" style="left:-14.8px;width:55.8px"><span>00290000</span></div>
<div class="c" style="left:44.5px;width:56.0px"><span>00001000</span></div>
<div class="c" style="left:300.7px;width:28.80000000000001px"><span>Priv</span></div>
<div class="c" style="left:333.5px;width:49.0px"><span>RW</span></div>
<div class="c" style="left:386px;width:49px"><span>RW</span></div>
</div>
<div class="row" style="top:331.36px;">
<div class="c red" style="left:-14.8px;width:55.8px"><span>002A0000</span></div>
<div class="c red" style="left:44.5px;width:56.0px"><span>00001000</span></div>
<div class="c red" style="left:300.7px;width:28.80000000000001px"><span>Priv</span></div>
<div class="c red" style="left:333.5px;width:49.0px"><span>RWE</span></div>
<div class="c red" style="left:386px;width:49px"><span>RWE</span></div>
</div>
<div class="row" style="top:344.48px;">
<div class="c red" style="left:-14.8px;width:55.8px"><span>002B0000</span></div>
<div class="c red" style="left:44.5px;width:56.0px"><span>00001000</span></div>
<div class="c red" style="left:300.7px;width:28.80000000000001px"><span>Priv</span></div>
<div class="c red" style="left:333.5px;width:49.0px"><span>RWE</span></div>
<div class="c red" style="left:386px;width:49px"><span>RWE</span></div>
</div>
<div class="row" style="top:357.60px;">
<div class="c" style="left:-14.8px;width:55.8px"><span>002C0000</span></div>
<div class="c" style="left:44.5px;width:56.0px"><span>00006000</span></div>
<div class="c" style="left:300.7px;width:28.80000000000001px"><span>Priv</span></div>
<div class="c" style="left:333.5px;width:49.0px"><span>RW</span></div>
<div class="c" style="left:386px;width:49px"><span>RW</span></div>
</div>
<div class="row" style="top:370.72px;">
<div class="c red" style="left:-14.8px;width:55.8px"><span>00340000</span></div>
<div class="c red" style="left:44.5px;width:56.0px"><span>00001000</span></div>
<div class="c red" style="left:300.7px;width:28.80000000000001px"><span>Priv</span></div>
<div class="c red" style="left:333.5px;width:49.0px"><span>RWE</span></div>
<div class="c red" style="left:386px;width:49px"><span>RWE</span></div>
</div>
<div class="row" style="top:383.84px;">
<div class="c" style="left:-14.8px;width:55.8px"><span>00400000</span></div>
<div class="c" style="left:44.5px;width:56.0px"><span>00001000</span></div>
<div class="c" style="left:103.8px;width:55.7px"><span>2p_dump</span></div>
<div class="c" style="left:222px;width:75px"><span>PE header</span></div>
<div class="c" style="left:300.7px;width:28.80000000000001px"><span>Imag</span></div>
<div class="c" style="left:333.5px;width:49.0px"><span>R</span></div>
<div class="c" style="left:386px;width:49px"><span>RWE</span></div>
</div>
<div class="row" style="top:396.96px;">
<div class="c" style="left:-14.8px;width:55.8px"><span>00401000</span></div>
<div class="c" style="left:44.5px;width:56.0px"><span>0007A000</span></div>
<div class="c" style="left:103.8px;width:55.7px"><span>2p_dump</span></div>
<div class="c" style="left:222px;width:75px"><span>SFX,code</span></div>
<div class="c" style="left:300.7px;width:28.80000000000001px"><span>Imag</span></div>
<div class="c" style="left:333.5px;width:49.0px"><span>R</span></div>
<div class="c" style="left:386px;width:49px"><span>RWE</span></div>
</div>
<div class="row" style="top:410.08px;">
<div class="c" style="left:-14.8px;width:55.8px"><span>0047B000</span></div>
<div class="c" style="left:44.5px;width:56.0px"><span>00042000</span></div>
<div class="c" style="left:103.8px;width:55.7px"><span>2p_dump</span></div>
<div class="c" style="left:222px;width:75px"><span>data,imports</span></div>
<div class="c" style="left:300.7px;width:28.80000000000001px"><span>Imag</span></div>
<div class="c" style="left:333.5px;width:49.0px"><span>R</span></div>
<div class="c" style="left:386px;width:49px"><span>RWE</span></div>
</div>
<div class="row" style="top:423.20px;">
<div class="c" style="left:-14.8px;width:55.8px"><span>004BD000</span></div>
<div class="c" style="left:44.5px;width:56.0px"><span>00022000</span></div>
<div class="c" style="left:103.8px;width:55.7px"><span>2p_dump</span></div>
<div class="c" style="left:300.7px;width:28.80000000000001px"><span>Imag</span></div>
<div class="c" style="left:333.5px;width:49.0px"><span>R</span></div>
<div class="c" style="left:386px;width:49px"><span>RWE</span></div>
</div>
<div class="row" style="top:436.32px;">
<div class="c" style="left:-14.8px;width:55.8px"><span>004DF000</span></div>
<div class="c" style="left:44.5px;width:56.0px"><span>00006000</span></div>
<div class="c" style="left:103.8px;width:55.7px"><span>2p_dump</span></div>
<div class="c" style="left:222px;width:75px"><span>resources</span></div>
<div class="c" style="left:300.7px;width:28.80000000000001px"><span>Imag</span></div>
<div class="c" style="left:333.5px;width:49.0px"><span>R</span></div>
<div class="c" style="left:386px;width:49px"><span>RWE</span></div>
</div>
<div class="row" style="top:449.44px;">
<div class="c" style="left:-14.8px;width:55.8px"><span>004E5000</span></div>
<div class="c" style="left:44.5px;width:56.0px"><span>00085000</span></div>
<div class="c" style="left:103.8px;width:55.7px"><span>2p_dump</span></div>
<div class="c" style="left:300.7px;width:28.80000000000001px"><span>Imag</span></div>
<div class="c" style="left:333.5px;width:49.0px"><span>R</span></div>
<div class="c" style="left:386px;width:49px"><span>RWE</span></div>
</div>
<div class="row" style="top:462.56px;background:#901c96;">
<div class="c sel" style="left:-14.8px;width:55.8px"><span>0056A000</span></div>
<div class="c sel" style="left:44.5px;width:56.0px"><span>00010000</span></div>
<div class="c sel" style="left:103.8px;width:55.7px"><span>2p_dump</span></div>
<div class="c sel" style="left:163px;width:55.5px"><span> IAT_SEC</span></div>
<div class="c sel" style="left:300.7px;width:28.80000000000001px"><span>Imag</span></div>
<div class="c sel" style="left:333.5px;width:49.0px"><span>R</span></div>
<div class="c sel" style="left:386px;width:49px"><span>RWE</span></div>
</div>
<div class="row" style="top:475.68px;">
<div class="c" style="left:-14.8px;width:55.8px"><span>00580000</span></div>
<div class="c" style="left:44.5px;width:56.0px"><span>0001B000</span></div>
<div class="c" style="left:300.7px;width:28.80000000000001px"><span>Priv</span></div>
<div class="c" style="left:333.5px;width:49.0px"><span>RW</span></div>
<div class="c" style="left:386px;width:49px"><span>RW</span></div>
</div>
<div class="row" style="top:488.80px;">
<div class="c" style="left:-14.8px;width:55.8px"><span>005A0000</span></div>
<div class="c" style="left:44.5px;width:56.0px"><span>00003000</span></div>
<div class="c" style="left:300.7px;width:28.80000000000001px"><span>Priv</span></div>
<div class="c" style="left:333.5px;width:49.0px"><span>RW</span></div>
<div class="c" style="left:386px;width:49px"><span>RW</span></div>
</div>
<div class="row" style="top:501.92px;">
<div class="c" style="left:-14.8px;width:55.8px"><span>005B0000</span></div>
<div class="c" style="left:44.5px;width:56.0px"><span>00013000</span></div>
<div class="c" style="left:300.7px;width:28.80000000000001px"><span>Map</span></div>
<div class="c" style="left:333.5px;width:49.0px"><span>R</span></div>
<div class="c" style="left:386px;width:49px"><span>R</span></div>
</div>
<div class="row" style="top:515.04px;">
<div class="c" style="left:-14.8px;width:55.8px"><span>00A30000</span></div>
<div class="c" style="left:44.5px;width:56.0px"><span>00003000</span></div>
<div class="c" style="left:300.7px;width:28.80000000000001px"><span>Map</span></div>
<div class="c" style="left:333.5px;width:49.0px"><span>R</span></div>
<div class="c" style="left:386px;width:49px"><span>R</span></div>
</div>
<div class="row" style="top:528.16px;">
<div class="c" style="left:-14.8px;width:55.8px"><span>00A40000</span></div>
<div class="c" style="left:44.5px;width:56.0px"><span>00181000</span></div>
<div class="c" style="left:300.7px;width:28.80000000000001px"><span>Map</span></div>
<div class="c" style="left:333.5px;width:49.0px"><span>R</span></div>
<div class="c" style="left:386px;width:49px"><span>R</span></div>
</div>
<div class="row" style="top:541.28px;">
<div class="c" style="left:-14.8px;width:55.8px"><span>00BD0000</span></div>
<div class="c" style="left:44.5px;width:56.0px"><span>000CF000</span></div>
<div class="c" style="left:300.7px;width:28.80000000000001px"><span>Map</span></div>
<div class="c" style="left:333.5px;width:49.0px"><span>R</span></div>
<div class="c" style="left:386px;width:49px"><span>R</span></div>
</div>
<div class="row" style="top:554.40px;">
<div class="c" style="left:-14.8px;width:55.8px"><span>00DA0000</span></div>
<div class="c" style="left:44.5px;width:56.0px"><span>00001000</span></div>
<div class="c" style="left:103.8px;width:55.7px"><span>comctl32</span></div>
<div class="c" style="left:222px;width:75px"><span>PE header</span></div>
<div class="c" style="left:300.7px;width:28.80000000000001px"><span>Imag</span></div>
<div class="c" style="left:333.5px;width:49.0px"><span>R</span></div>
<div class="c" style="left:386px;width:49px"><span>RWE</span></div>
</div>
<div class="row" style="top:567.52px;">
<div class="c" style="left:-14.8px;width:55.8px"><span>00DA1000</span></div>
<div class="c" style="left:44.5px;width:56.0px"><span>0014B000</span></div>
<div class="c" style="left:103.8px;width:55.7px"><span>comctl32</span></div>
<div class="c" style="left:163px;width:55.5px"><span>.text</span></div>
<div class="c" style="left:222px;width:75px"><span>SFX,code,imports</span></div>
<div class="c" style="left:300.7px;width:28.80000000000001px"><span>Imag</span></div>
<div class="c" style="left:333.5px;width:49.0px"><span>R</span></div>
<div class="c" style="left:386px;width:49px"><span>RWE</span></div>
</div>
<div class="row" style="top:580.64px;">
<div class="c" style="left:-14.8px;width:55.8px"><span>00EEC000</span></div>
<div class="c" style="left:44.5px;width:56.0px"><span>00003000</span></div>
<div class="c" style="left:103.8px;width:55.7px"><span>comctl32</span></div>
<div class="c" style="left:163px;width:55.5px"><span>.data</span></div>
<div class="c" style="left:300.7px;width:28.80000000000001px"><span>Imag</span></div>
<div class="c" style="left:333.5px;width:49.0px"><span>R</span></div>
<div class="c" style="left:386px;width:49px"><span>RWE</span></div>
</div>
<div class="row" style="top:593.76px;">
<div class="c" style="left:-14.8px;width:55.8px"><span>00EEF000</span></div>
<div class="c" style="left:44.5px;width:56.0px"><span>00041000</span></div>
<div class="c" style="left:103.8px;width:55.7px"><span>comctl32</span></div>
<div class="c" style="left:163px;width:55.5px"><span>.rsrc</span></div>
<div class="c" style="left:222px;width:75px"><span>resources</span></div>
<div class="c" style="left:300.7px;width:28.80000000000001px"><span>Imag</span></div>
<div class="c" style="left:333.5px;width:49.0px"><span>R</span></div>
<div class="c" style="left:386px;width:49px"><span>RWE</span></div>
</div>
<div class="row" style="top:606.88px;">
<div class="c" style="left:-14.8px;width:55.8px"><span>00F30000</span></div>
<div class="c" style="left:44.5px;width:56.0px"><span>0000E000</span></div>
<div class="c" style="left:103.8px;width:55.7px"><span>comctl32</span></div>
<div class="c" style="left:163px;width:55.5px"><span>.reloc</span></div>
<div class="c" style="left:300.7px;width:28.80000000000001px"><span>Imag</span></div>
<div class="c" style="left:333.5px;width:49.0px"><span>R</span></div>
<div class="c" style="left:386px;width:49px"><span>RWE</span></div>
</div>
<div class="row" style="top:620.00px;">
<div class="c" style="left:-14.8px;width:55.8px"><span>00F40000</span></div>
<div class="c" style="left:44.5px;width:56.0px"><span>00008000</span></div>
<div class="c" style="left:103.8px;width:55.7px"><span>wow64cpu</span></div>
<div class="c" style="left:222px;width:75px"><span>PE header</span></div>
<div class="c" style="left:300.7px;width:28.80000000000001px"><span>Imag</span></div>
<div class="c" style="left:333.5px;width:49.0px"><span>R</span></div>
<div class="c" style="left:386px;width:49px"><span>RWE</span></div>
</div>
<div class="row" style="top:633.12px;">
<div class="c" style="left:-14.8px;width:55.8px"><span>00F50000</span></div>
<div class="c" style="left:44.5px;width:56.0px"><span>0005C000</span></div>
<div class="c" style="left:103.8px;width:55.7px"><span>wow64win</span></div>
<div class="c" style="left:222px;width:75px"><span>PE header</span></div>
<div class="c" style="left:300.7px;width:28.80000000000001px"><span>Imag</span></div>
<div class="c" style="left:333.5px;width:49.0px"><span>R</span></div>
<div class="c" style="left:386px;width:49px"><span>RWE</span></div>
</div>
<div class="row" style="top:646.24px;">
<div class="c" style="left:-14.8px;width:55.8px"><span>00FB0000</span></div>
<div class="c" style="left:44.5px;width:56.0px"><span>0003F000</span></div>
<div class="c" style="left:103.8px;width:55.7px"><span>wow64</span></div>
<div class="c" style="left:222px;width:75px"><span>PE header</span></div>
<div class="c" style="left:300.7px;width:28.80000000000001px"><span>Imag</span></div>
<div class="c" style="left:333.5px;width:49.0px"><span>R</span></div>
<div class="c" style="left:386px;width:49px"><span>RWE</span></div>
</div>
<div class="row" style="top:659.36px;">
<div class="c" style="left:-14.8px;width:55.8px"><span>01290000</span></div>
<div class="c" style="left:44.5px;width:56.0px"><span>00001000</span></div>
<div class="c" style="left:103.8px;width:55.7px"><span>winspool</span></div>
<div class="c" style="left:222px;width:75px"><span>PE header</span></div>
<div class="c" style="left:300.7px;width:28.80000000000001px"><span>Imag</span></div>
<div class="c" style="left:333.5px;width:49.0px"><span>R</span></div>
<div class="c" style="left:386px;width:49px"><span>RWE</span></div>
</div>
<div class="row" style="top:672.48px;">
<div class="c" style="left:-14.8px;width:55.8px"><span>01291000</span></div>
<div class="c" style="left:44.5px;width:56.0px"><span>00035000</span></div>
<div class="c" style="left:103.8px;width:55.7px"><span>winspool</span></div>
<div class="c" style="left:163px;width:55.5px"><span>.text</span></div>
<div class="c" style="left:222px;width:75px"><span>SFX,code,imports</span></div>
<div class="c" style="left:300.7px;width:28.80000000000001px"><span>Imag</span></div>
<div class="c" style="left:333.5px;width:49.0px"><span>R</span></div>
<div class="c" style="left:386px;width:49px"><span>RWE</span></div>
</div>
<div class="row" style="top:685.60px;">
<div class="c" style="left:-14.8px;width:55.8px"><span>012C6000</span></div>
<div class="c" style="left:44.5px;width:56.0px"><span>00001000</span></div>
<div class="c" style="left:103.8px;width:55.7px"><span>winspool</span></div>
<div class="c" style="left:163px;width:55.5px"><span>.data</span></div>
<div class="c" style="left:222px;width:75px"><span>data</span></div>
<div class="c" style="left:300.7px;width:28.80000000000001px"><span>Imag</span></div>
<div class="c" style="left:333.5px;width:49.0px"><span>R</span></div>
<div class="c" style="left:386px;width:49px"><span>RWE</span></div>
</div>
<div class="row" style="top:698.72px;">
<div class="c" style="left:-14.8px;width:55.8px"><span>012C7000</span></div>
<div class="c" style="left:44.5px;width:56.0px"><span>00010000</span></div>
<div class="c" style="left:103.8px;width:55.7px"><span>winspool</span></div>
<div class="c" style="left:163px;width:55.5px"><span>.rsrc</span></div>
<div class="c" style="left:222px;width:75px"><span>resources</span></div>
<div class="c" style="left:300.7px;width:28.80000000000001px"><span>Imag</span></div>
<div class="c" style="left:333.5px;width:49.0px"><span>R</span></div>
<div class="c" style="left:386px;width:49px"><span>RWE</span></div>
</div>
<div class="vs" style="left:40.2px"></div>
<div class="vs" style="left:99.7px"></div>
<div class="vs" style="left:158.7px"></div>
<div class="vs" style="left:217.7px"></div>
<div class="vs" style="left:296.2px"></div>
<div class="vs" style="left:328.7px"></div>
<div class="vs" style="left:381.7px"></div>
<div class="vs" style="left:434.2px"></div>
<svg class="ab" style="left:0;top:0" width="300" height="703"><g fill="none" stroke="#3cb83c" stroke-width="1.05"><path transform="translate(163,395.16) scale(1.02,1.22)" d="M1 3.5H6M3.5 1V7M1 6.5H6.5M2.5 7V10.5M2 9.5Q6 12 11.5 11M7 2H11V6H7.5V10H11.5"/><path transform="translate(176,395.16) scale(1.02,1.22)" d="M5.5 1V5M5.5 3H10M2 5.5H10V9H2ZM2 11.5L2.8 10.3M4.6 11.5V10.3M7.2 11.5V10.3M10 11.5L9.3 10.3"/><path transform="translate(189,395.16) scale(1.02,1.22)" d="M3.5 1L1.2 5.5M2.4 4V11.5M5 1.8H10.5V5H5ZM4.2 7H11.2M7.7 5V11.5M7.4 7.6L4.2 11M8 7.6L11.5 11"/><path transform="translate(202,395.16) scale(1.02,1.22)" d="M1 4H4.5M2.8 1V11L1.8 10M1 8.5L4.5 6.5M7.5 0.8L8.5 2M5.5 3H11V7H6M6 3V8L4.8 11.2"/><path transform="translate(163,408.28) scale(1.02,1.22)" d="M1 3.5H6M3.5 1V7M1 6.5H6.5M2.5 7V10.5M2 9.5Q6 12 11.5 11M7 2H11V6H7.5V10H11.5"/><path transform="translate(176,408.28) scale(1.02,1.22)" d="M5.5 1V5M5.5 3H10M2 5.5H10V9H2ZM2 11.5L2.8 10.3M4.6 11.5V10.3M7.2 11.5V10.3M10 11.5L9.3 10.3"/><path transform="translate(189,408.28) scale(1.02,1.22)" d="M3.5 1L1.2 5.5M2.4 4V11.5M5 1.8H10.5V5H5ZM4.2 7H11.2M7.7 5V11.5M7.4 7.6L4.2 11M8 7.6L11.5 11"/><path transform="translate(202,408.28) scale(1.02,1.22)" d="M1 4H4.5M2.8 1V11L1.8 10M1 8.5L4.5 6.5M7.5 0.8L8.5 2M5.5 3H11V7H6M6 3V8L4.8 11.2"/><path transform="translate(163,421.40) scale(1.02,1.22)" d="M1 3.5H6M3.5 1V7M1 6.5H6.5M2.5 7V10.5M2 9.5Q6 12 11.5 11M7 2H11V6H7.5V10H11.5"/><path transform="translate(176,421.40) scale(1.02,1.22)" d="M5.5 1V5M5.5 3H10M2 5.5H10V9H2ZM2 11.5L2.8 10.3M4.6 11.5V10.3M7.2 11.5V10.3M10 11.5L9.3 10.3"/><path transform="translate(189,421.40) scale(1.02,1.22)" d="M3.5 1L1.2 5.5M2.4 4V11.5M5 1.8H10.5V5H5ZM4.2 7H11.2M7.7 5V11.5M7.4 7.6L4.2 11M8 7.6L11.5 11"/><path transform="translate(202,421.40) scale(1.02,1.22)" d="M1 4H4.5M2.8 1V11L1.8 10M1 8.5L4.5 6.5M7.5 0.8L8.5 2M5.5 3H11V7H6M6 3V8L4.8 11.2"/><path transform="translate(163,434.52) scale(1.02,1.22)" d="M1 3.5H6M3.5 1V7M1 6.5H6.5M2.5 7V10.5M2 9.5Q6 12 11.5 11M7 2H11V6H7.5V10H11.5"/><path transform="translate(176,434.52) scale(1.02,1.22)" d="M5.5 1V5M5.5 3H10M2 5.5H10V9H2ZM2 11.5L2.8 10.3M4.6 11.5V10.3M7.2 11.5V10.3M10 11.5L9.3 10.3"/><path transform="translate(189,434.52) scale(1.02,1.22)" d="M3.5 1L1.2 5.5M2.4 4V11.5M5 1.8H10.5V5H5ZM4.2 7H11.2M7.7 5V11.5M7.4 7.6L4.2 11M8 7.6L11.5 11"/><path transform="translate(202,434.52) scale(1.02,1.22)" d="M1 4H4.5M2.8 1V11L1.8 10M1 8.5L4.5 6.5M7.5 0.8L8.5 2M5.5 3H11V7H6M6 3V8L4.8 11.2"/><path transform="translate(163,447.64) scale(1.02,1.22)" d="M1 3.5H6M3.5 1V7M1 6.5H6.5M2.5 7V10.5M2 9.5Q6 12 11.5 11M7 2H11V6H7.5V10H11.5"/><path transform="translate(176,447.64) scale(1.02,1.22)" d="M5.5 1V5M5.5 3H10M2 5.5H10V9H2ZM2 11.5L2.8 10.3M4.6 11.5V10.3M7.2 11.5V10.3M10 11.5L9.3 10.3"/><path transform="translate(189,447.64) scale(1.02,1.22)" d="M3.5 1L1.2 5.5M2.4 4V11.5M5 1.8H10.5V5H5ZM4.2 7H11.2M7.7 5V11.5M7.4 7.6L4.2 11M8 7.6L11.5 11"/><path transform="translate(202,447.64) scale(1.02,1.22)" d="M1 4H4.5M2.8 1V11L1.8 10M1 8.5L4.5 6.5M7.5 0.8L8.5 2M5.5 3H11V7H6M6 3V8L4.8 11.2"/></g></svg>
<svg class="ab" style="left:0;top:0" width="1281" height="703"><g transform="translate(1108,645) skewX(-6)"><path d="M3 0H10V5H3ZM1 9H9V14H1ZM4 16H10L6 31H0ZM12 0H39V5H12ZM12 8H38V31H12Z" fill="#58b2ec"/><path d="M17 11H20V19H17ZM25 11H28V19H25ZM16 19H35V21.5H16ZM16 24H35V26.5H16Z" fill="#000"/></g><g transform="translate(1149,645) skewX(-6)"><path d="M12 0H29L28 4H11ZM12 5H20L9 31H0ZM21 5H28.5L39 31H30Z" fill="#58b2ec"/></g><g transform="translate(1189,645) skewX(-6)"><path d="M2 0H9V5H2ZM1 8H9V31H1ZM16 0H34L38 7H12ZM13 9H21V31H13ZM13 26H38V31H13ZM21 13H37V18H21Z" fill="#58b2ec"/><path d="M21 7H33V9H21Z" fill="#000"/></g><g transform="translate(1228,645) skewX(-6)"><path d="M5 0H12V27H5ZM0 8H16V13H0ZM0 25L16 22V30L0 31ZM19 1H40V6H19ZM16 11H40V16H16ZM22 16H30L24 25H36V31H14ZM30 19H36L38 25H32Z" fill="#58b2ec"/></g></svg>
<div class="ab" style="left:379.5px;top:201.5px;width:707px;height:396px;border:1px solid #dfe9f5;border-radius:6px 6px 0 0;background:linear-gradient(#e4ecf6 0px,#c6d2e3 8px,#c8d4e5 18px,#d8e2ef 29px,#d8e2ef 30px,#d4e0ee 31px,#d6e2f0 100%)"></div>
<div class="ab" style="left:381px;top:203px;width:704px;height:1px;background:#eef4fb"></div>
<div class="ab" style="left:390px;top:212px;width:17px;height:17px;background:#5a0a0a;border:1px solid #300"><div class="ab" style="left:0;top:-1px;width:15px;text-align:center;font-family:'Liberation Serif',serif;font-weight:bold;font-size:13px;color:#e83030;line-height:17px">M</div></div>
<div class="ab" style="left:411.5px;top:212px;font-size:15px;letter-spacing:-0.3px;color:#4f5e74;white-space:pre;line-height:18px">Universal Import Fixer v1.2  (FINAL)   -  32bit</div>
<div class="ab" style="left:970px;top:212px;width:34px;height:18px;border:1px solid #8d9cb4;border-radius:3px;background:linear-gradient(#dfe8f5,#c6d4ea);box-shadow:inset 0 0 0 1px #eef3fa"></div>
<div class="ab" style="left:1007px;top:212px;width:33px;height:18px;border:1px solid #8d9cb4;border-radius:3px;background:linear-gradient(#dfe8f5,#c6d4ea);box-shadow:inset 0 0 0 1px #eef3fa"></div>
<div class="ab" style="left:1043px;top:212px;width:33px;height:18px;border:1px solid #8d9cb4;border-radius:3px;background:linear-gradient(#dfe8f5,#c6d4ea);box-shadow:inset 0 0 0 1px #eef3fa"></div>
<div class="ab" style="left:981px;top:222px;width:11px;height:5px;border:1.5px solid #4a5670;border-radius:1px;background:#e8eef8"></div>
<div class="ab" style="left:1017.5px;top:216px;width:12px;height:9px;border:1.5px solid #4a5670;border-top-width:2.5px;background:#dde5f0"></div>
<svg class="ab" style="left:1052px;top:214px" width="16" height="14" viewBox="0 0 16 14"><path d="M3.5 3L12 11M12 3L3.5 11" stroke="#6a788e" stroke-width="3.6" stroke-linecap="round"/><path d="M3.5 3L12 11M12 3L3.5 11" stroke="#f6f8fb" stroke-width="1.9" stroke-linecap="round"/></svg>
<div class="ab" style="left:384px;top:232px;width:699px;height:361px;background:#e4ecf6"></div>
<div class="ab" style="left:388px;top:232px;width:691px;height:357px;background:linear-gradient(#eceef4,#f0f0f0 10px)"></div>
<div class="ab" style="left:396px;top:241.8px;width:516.5px;height:316.5px;background:#fff;border-left:3px solid #ececec;border-top:1.7px solid #c4c4c4"></div>
<div class="ab mono" style="left:399px;top:247.2px;font-size:12.78px;line-height:12px;color:#1c1c1c;white-space:pre">0046A688: 0047B684-> 0056A690 : 75CE0C45 : ChooseColorA

IMM32.DLL
753E0000 to: 75440000

MSCTF.dll
75A90000 to: 75B5E000

===============================================================

Fixing Success...

Fixed Module : 2p_dump.exe
Image Base   : 00400000

IAT RVA  : 0016A000
IAT Size : 00000698

Normal Imports   : 1834
Directly Imports : 0
All Imports      : 1834

===============================================================</div>
<div class="ab" style="left:895px;top:242.5px;width:17px;height:299px;background:linear-gradient(90deg,#e6e6e6,#f2f2f2 40%,#ececec)"></div>
<div class="ab" style="left:899px;top:251px;width:0;height:0;border-left:4px solid transparent;border-right:4px solid transparent;border-bottom:4px solid #444"></div>
<div class="ab" style="left:895.5px;top:503.5px;width:16px;height:16.5px;border:1px solid #9a9a9a;border-radius:2px;background:linear-gradient(90deg,#f6f6f6,#dedede)"></div>
<div class="ab" style="left:899px;top:528px;width:0;height:0;border-left:4px solid transparent;border-right:4px solid transparent;border-top:4px solid #444"></div>
<div class="ab" style="left:397px;top:541.5px;width:498px;height:16.5px;background:linear-gradient(#e9e9e9,#f3f3f3 40%,#ececec)"></div>
<div class="ab" style="left:404px;top:546px;width:0;height:0;border-top:4px solid transparent;border-bottom:4px solid transparent;border-right:4px solid #555"></div>
<div class="ab" style="left:418px;top:541.5px;width:410.5px;height:16.5px;border:1px solid #a4a4a4;border-radius:2px;background:linear-gradient(#f4f4f4,#dcdcdc 60%,#d0d0d0)"></div>
<div class="ab" style="left:619px;top:546px;width:8px;height:7px;border-left:1px solid #777;border-right:1px solid #777"><div class="ab" style="left:2.5px;top:0;width:1px;height:7px;background:#777"></div></div>
<div class="ab" style="left:882px;top:546px;width:0;height:0;border-top:4px solid transparent;border-bottom:4px solid transparent;border-left:4px solid #555"></div>
<div class="ab" style="left:894.5px;top:542.5px;width:17px;height:16px;border:1px solid #707070;border-radius:2px;background:linear-gradient(#fafafa,#e2e2e2);font-size:12px;color:#222;text-align:center;line-height:14px">C</div>
<div class="ab" style="left:920px;top:245px;width:146px;height:242px;background:#f3f3f3;border:1px solid #f8f8f8"></div>
<div class="ab" style="left:932px;top:249.5px;font-size:11.8px;color:#111;white-space:pre;line-height:14px">Process ID :</div>
<div class="ab" style="left:931px;top:264.5px;width:78px;height:22px;background:#fff;border-top:1px solid #9a9a9a;border-left:1px solid #f2f2f2"></div>
<div class="ab" style="left:934px;top:267.5px;font-size:12px;color:#111;white-space:pre;line-height:14px">2444</div>
<div class="ab" style="left:1017px;top:271.0px;width:14px;height:13.5px;border:1px solid #8e8e8e;background:linear-gradient(135deg,#e4e4e4,#f8f8f8)"></div>
<div class="ab" style="left:1035.5px;top:272.5px;font-size:12px;color:#111;line-height:14px">Hex</div>
<div class="ab" style="left:932px;top:293.5px;font-size:11.8px;color:#111;white-space:pre;line-height:14px">Code Start :</div>
<div class="ab" style="left:931px;top:308.5px;width:78px;height:22px;background:#fff;border-top:1px solid #9a9a9a;border-left:1px solid #f2f2f2"></div>
<div class="ab" style="left:934px;top:311.5px;font-size:12px;color:#111;white-space:pre;line-height:14px">00401000</div>
<div class="ab" style="left:1017px;top:315.0px;width:14px;height:13.5px;border:1px solid #c4c4c4;background:linear-gradient(135deg,#e4e4e4,#f8f8f8)"></div>
<svg class="ab" style="left:1017px;top:315.0px" width="14" height="14" viewBox="0 0 14 14"><path d="M3.5 6.5L6 10.5L11 2.5" fill="none" stroke="#b8b8b8" stroke-width="1.6"/></svg>
<div class="ab" style="left:1035.5px;top:316.5px;font-size:12px;color:#a4a4a4;line-height:14px">Hex</div>
<div class="ab" style="left:932px;top:337.5px;font-size:11.8px;color:#111;white-space:pre;line-height:14px">Code End :</div>
<div class="ab" style="left:931px;top:352.5px;width:78px;height:22px;background:#fff;border-top:1px solid #9a9a9a;border-left:1px solid #f2f2f2"></div>
<div class="ab" style="left:934px;top:355.5px;font-size:12px;color:#111;white-space:pre;line-height:14px">0047B000</div>
<div class="ab" style="left:1017px;top:359.0px;width:14px;height:13.5px;border:1px solid #c4c4c4;background:linear-gradient(135deg,#e4e4e4,#f8f8f8)"></div>
<svg class="ab" style="left:1017px;top:359.0px" width="14" height="14" viewBox="0 0 14 14"><path d="M3.5 6.5L6 10.5L11 2.5" fill="none" stroke="#b8b8b8" stroke-width="1.6"/></svg>
<div class="ab" style="left:1035.5px;top:360.5px;font-size:12px;color:#a4a4a4;line-height:14px">Hex</div>
<div class="ab" style="left:932px;top:381.5px;font-size:11.8px;color:#111;white-space:pre;line-height:14px">New IAT VA :</div>
<div class="ab" style="left:931px;top:396.5px;width:78px;height:22px;background:#fff;border-top:1px solid #9a9a9a;border-left:1px solid #f2f2f2"></div>
<div class="ab" style="left:934px;top:399.5px;font-size:12px;color:#111;white-space:pre;line-height:14px">0056A698</div>
<div class="ab" style="left:1017px;top:403.0px;width:14px;height:13.5px;border:1px solid #c4c4c4;background:linear-gradient(135deg,#e4e4e4,#f8f8f8)"></div>
<svg class="ab" style="left:1017px;top:403.0px" width="14" height="14" viewBox="0 0 14 14"><path d="M3.5 6.5L6 10.5L11 2.5" fill="none" stroke="#b8b8b8" stroke-width="1.6"/></svg>
<div class="ab" style="left:1035.5px;top:404.5px;font-size:12px;color:#a4a4a4;line-height:14px">Hex</div>
<div class="ab" style="left:930px;top:428px;width:14px;height:13.5px;border:1px solid #8e8e8e;background:linear-gradient(135deg,#dcdcdc,#f8f8f8)"></div>
<svg class="ab" style="left:930px;top:428px" width="14" height="14" viewBox="0 0 14 14"><path d="M3.5 6.5L6 10.5L11 2.5" fill="none" stroke="#2a3f6a" stroke-width="2"/></svg>
<div class="ab" style="left:948px;top:428px;font-size:11.8px;letter-spacing:-0.2px;color:#111;white-space:pre;line-height:14px">Fix Directly Imports</div>
<div class="ab" style="left:930px;top:447.5px;width:14px;height:13.5px;border:1px solid #8e8e8e;background:linear-gradient(135deg,#dcdcdc,#f8f8f8)"></div>
<div class="ab" style="left:948px;top:447.5px;font-size:11.8px;letter-spacing:-0.2px;color:#111;white-space:pre;line-height:14px">Fast Speed</div>
<div class="ab" style="left:930px;top:467px;width:14px;height:13.5px;border:1px solid #8e8e8e;background:linear-gradient(135deg,#dcdcdc,#f8f8f8)"></div>
<div class="ab" style="left:948px;top:467px;font-size:11.8px;letter-spacing:-0.2px;color:#111;white-space:pre;line-height:14px">Always OnTop</div>
<div class="ab" style="left:930px;top:501px;width:60px;height:24px;border-radius:3px;border:1px solid #3c7fb1;background:linear-gradient(#e5f4fc,#c4e5f6 50%,#a9d9f2 51%,#b0ddf4);box-shadow:inset 0 0 0 1px #9ee0f8;font-size:12px;color:#111;text-align:center;line-height:22px">Start</div>
<div class="ab" style="left:997.8px;top:501px;width:64.70000000000005px;height:24px;border-radius:3px;border:1px solid #707070;background:linear-gradient(#f2f2f2,#ebebeb 50%,#dddddd 51%,#cfcfcf);font-size:12px;color:#111;text-align:center;line-height:22px">Save Log</div>
<div class="ab" style="left:930px;top:532.7px;width:60px;height:23.899999999999977px;border-radius:3px;border:1px solid #707070;background:linear-gradient(#f2f2f2,#ebebeb 50%,#dddddd 51%,#cfcfcf);font-size:12px;color:#111;text-align:center;line-height:21.899999999999977px">Find Log</div>
<div class="ab" style="left:997.8px;top:532.7px;width:64.70000000000005px;height:23.899999999999977px;border-radius:3px;border:1px solid #707070;background:linear-gradient(#f2f2f2,#ebebeb 50%,#dddddd 51%,#cfcfcf);font-size:12px;color:#111;text-align:center;line-height:21.899999999999977px">Exit</div>
<div class="ab" style="left:389px;top:568px;width:689px;height:1px;background:#d6d6d6"></div>
<div class="ab" style="left:393px;top:572px;font-size:12.55px;color:#1e1e1e;white-space:pre;line-height:15px">Universal Import Fixer v1.2  (FINAL)  by : Magic_h2001</div>
<div class="ab" style="left:713px;top:570px;width:1px;height:18px;background:#d4d4d4"></div>
<div class="ab" style="left:773px;top:570px;width:1px;height:18px;background:#d4d4d4"></div>
<div class="ab" style="left:723.5px;top:572px;font-size:12.55px;color:#1e1e1e;white-space:pre;line-height:15px">Ready</div>
<div class="ab" style="left:712.2px;top:356.5px;width:63.4px;height:63.4px;border-radius:50%;background:#ffe800"></div>
</body></html>
